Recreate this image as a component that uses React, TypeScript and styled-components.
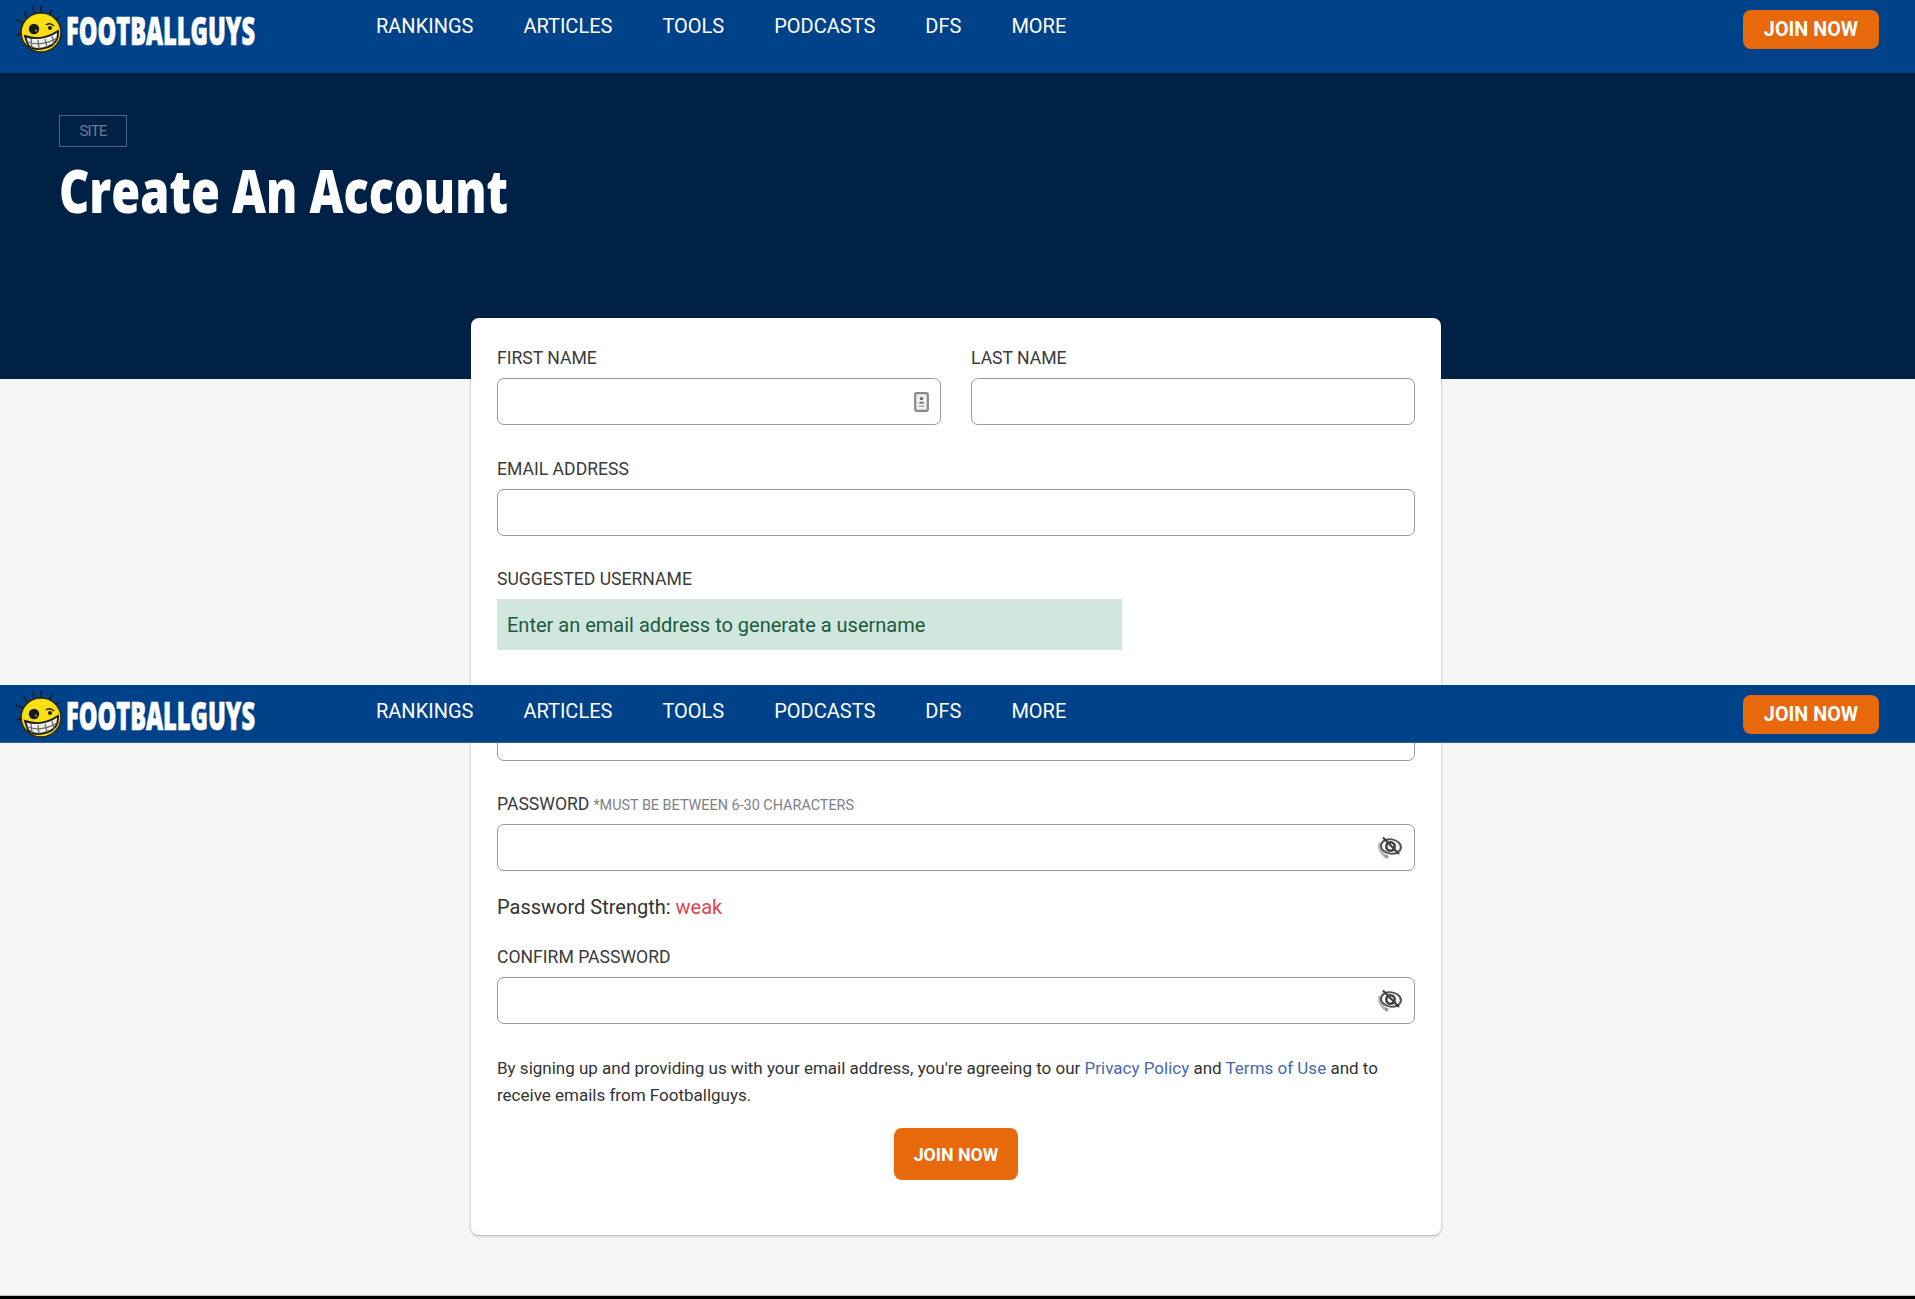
import * as React from 'react';
import styled, { createGlobalStyle } from 'styled-components';

const GlobalStyle = createGlobalStyle`
  html, body {
    margin: 0;
    padding: 0;
    background: #f6f6f6;
    font-family: Roboto, "Liberation Sans", sans-serif;
  }
  * { box-sizing: border-box; }
`;

const NAV_ITEMS = ['RANKINGS', 'ARTICLES', 'TOOLS', 'PODCASTS', 'DFS', 'MORE'];

const FaceIcon = () => (
  <svg width="46" height="48" viewBox="0 0 46 48">
    <g stroke="#1c1c1c" strokeWidth="1.5" strokeLinecap="round">
      <path d="M8 18 L0 15" />
      <path d="M6 28 L1 30" />
      <path d="M11 12 L8 7" />
      <path d="M18 9 L17 2" />
      <path d="M25 8 L25 1" />
      <path d="M33 10 L36 5" />
      <path d="M39 15 L43 12" />
    </g>
    <ellipse cx="25" cy="27.5" rx="20" ry="19.5" fill="#fbdf13" stroke="#2a2a18" strokeWidth="1.6" />
    <circle cx="18" cy="24" r="5.2" fill="#1a1a1a" />
    <circle cx="20" cy="25.5" r="1.2" fill="#777" />
    <path d="M30 20 Q34 17 38 21" fill="none" stroke="#1c1c1c" strokeWidth="1.4" />
    <circle cx="34" cy="23" r="2" fill="#1c1c1c" />
    <path d="M9 31 Q26 37 42 26 Q43 38 32 42 Q19 47 12 40 Z" fill="#f1f1ea" stroke="#1c1c1c" strokeWidth="1.9" />
    <g stroke="#6a6a6a" strokeWidth="1.3">
      <path d="M15 34 L16 43" />
      <path d="M22 35 L23 44" />
      <path d="M29 34 L31 42" />
      <path d="M36 31 L38 39" />
      <path d="M11 37 Q26 42 41 33" fill="none" />
    </g>
  </svg>
);

const ContactIcon = () => (
  <svg width="15" height="20" viewBox="0 0 15 20">
    <rect x="1.2" y="1.2" width="12.6" height="17.6" rx="1.5" fill="#f0f0f0" stroke="#8a8a8a" strokeWidth="2.2" />
    <circle cx="7.5" cy="6.6" r="1.7" fill="#666" />
    <path d="M4.4 11.4 Q7.5 7.4 10.6 11.4 Z" fill="#666" />
    <path d="M4.6 14.2 H10.4" stroke="#aaa" strokeWidth="1.4" />
  </svg>
);

const EyeOffIcon = () => (
  <svg width="26" height="24" viewBox="0 0 26 24">
    <path d="M3 7 Q1 14 8 20" fill="none" stroke="#b5b5b5" strokeWidth="3" />
    <circle cx="9.5" cy="20.5" r="2" fill="#9a9a9a" />
    <ellipse cx="14" cy="10.5" rx="10" ry="7.2" transform="rotate(8 14 10.5)" fill="none" stroke="#555" strokeWidth="2" />
    <circle cx="13.5" cy="10.5" r="4.2" fill="none" stroke="#444" strokeWidth="2.6" />
    <path d="M6 1.5 L22 18" stroke="#3c3c3c" strokeWidth="2" />
  </svg>
);

const Bar = styled.header<{ $height: number }>`
  display: flex;
  align-items: flex-start;
  height: ${(p) => p.$height}px;
  padding: 10px 36px 0 16px;
  background: #004289;
`;

const Logo = styled.a`
  display: flex;
  align-items: flex-start;
  width: 360px;
  height: 48px;
  margin-top: -5px;
`;

const Wordmark = styled.svg`
  margin: 10px 0 0 4px;
  overflow: visible;
`;

const Nav = styled.nav`
  display: flex;
  gap: 50px;
  padding-top: 4px;
  flex: 1;
`;

const NavLink = styled.a`
  color: #fff;
  font-size: 20px;
  line-height: 24px;
`;

const Button = styled.button<{ $large?: boolean }>`
  border: 0;
  border-radius: 8px;
  background: #e8690b;
  color: #fff;
  font-family: inherit;
  font-weight: 700;
  font-size: ${(p) => (p.$large ? 17.8 : 19.8)}px;
  width: ${(p) => (p.$large ? 124 : 136)}px;
  height: ${(p) => (p.$large ? 52 : 39)}px;
  padding: 0;
`;

const StickyBar = styled(Bar)`
  position: absolute;
  left: 0;
  right: 0;
  top: 685px;
  z-index: 5;
  border-bottom: 1px solid #2a64a4;
`;

const Page = styled.div`
  position: relative;
  min-height: 1299px;
  display: flex;
  flex-direction: column;
`;

const Hero = styled.section`
  height: 306px;
  padding: 42px 59px 0;
  background: #002146;
`;

const Tag = styled.span`
  display: flex;
  align-items: center;
  justify-content: center;
  width: 68px;
  height: 32px;
  border: 1px solid #4d6480;
  color: #6b7c93;
  font-size: 15px;
  letter-spacing: -0.8px;
`;

const Title = styled.h1`
  margin: 7px 0 0;
  color: #fff;
  font-family: "Open Sans", sans-serif;
  font-weight: 800;
  font-size: 60px;
  line-height: 72px;
  white-space: nowrap;
  transform: scaleX(0.78);
  transform-origin: left center;
`;

const Card = styled.main`
  position: relative;
  width: 970px;
  height: 917px;
  margin: -61px 474px 60px 471px;
  padding: 27px 26px 0;
  background: #fff;
  border-radius: 8px;
  box-shadow: 0 1px 3px rgba(0, 0, 0, 0.3);
`;

const Form = styled.form`
  display: flex;
  flex-direction: column;
  gap: 30px;
`;

const Row = styled.div`
  display: grid;
  grid-template-columns: 1fr 1fr;
  gap: 30px;
  margin-bottom: 1px;
`;

const Field = styled.div`
  display: flex;
  flex-direction: column;
`;

const Label = styled.label`
  display: block;
  height: 24px;
  margin-bottom: 9px;
  padding-top: 1px;
  color: #3a3a3a;
  font-size: 17.6px;
  line-height: 24px;
`;

const Hint = styled.small`
  color: #7c8289;
  font-size: 14.4px;
  margin-left: 4px;
`;

const InputWrap = styled.div`
  position: relative;
`;

const Input = styled.input`
  display: block;
  width: 100%;
  height: 47px;
  border: 1.5px solid #999;
  border-radius: 7px;
  background: #fff;
`;

const InputIcon = styled.span`
  position: absolute;
  top: 50%;
  right: 12px;
  transform: translateY(-50%);
  display: flex;
`;

const Suggest = styled.div`
  display: flex;
  align-items: center;
  width: 625px;
  height: 51px;
  margin-bottom: 1px;
  padding: 0 10px;
  background: #d1e7dd;
  color: #1b5a3e;
  font-size: 20px;
`;

const Strength = styled.div`
  margin: -7px 0;
  color: #333;
  font-size: 20px;
  line-height: 27px;
`;

const Weak = styled.span`
  color: #de4455;
`;

const Legal = styled.p`
  margin: 0;
  padding-top: 1px;
  color: #333;
  font-size: 17px;
  line-height: 27px;
`;

const LegalLink = styled.a`
  color: #4a68ac;
`;

const Submit = styled.div`
  display: flex;
  justify-content: center;
  margin-top: -11px;
`;

const Footer = styled.footer`
  margin-top: auto;
  height: 4px;
  background: #000;
  border-top: 1px solid #c4c4c4;
`;

const Header = ({ as, height }: { as?: typeof StickyBar; height: number }) => {
  const Wrapper = as ?? Bar;
  return (
    <Wrapper $height={height}>
      <Logo>
        <FaceIcon />
        <Wordmark width="189" height="32" viewBox="0 0 189 32">
          <text
            x="0"
            y="30"
            textLength="189"
            lengthAdjust="spacingAndGlyphs"
            fill="#fff"
            stroke="#fff"
            strokeWidth="0.7"
            fontFamily="'Open Sans', sans-serif"
            fontWeight="800"
            fontSize="38"
          >
            FOOTBALLGUYS
          </text>
        </Wordmark>
      </Logo>
      <Nav>
        {NAV_ITEMS.map((item) => (
          <NavLink key={item}>{item}</NavLink>
        ))}
      </Nav>
      <Button>JOIN NOW</Button>
    </Wrapper>
  );
};

const TextField = ({ label, hint, icon }: { label?: string; hint?: string; icon?: React.ReactNode }) => (
  <Field>
    <Label>
      {label}
      {hint && <Hint>{hint}</Hint>}
    </Label>
    <InputWrap>
      <Input />
      {icon}
    </InputWrap>
  </Field>
);

export default function App() {
  return (
    <Page>
      <GlobalStyle />
      <Header height={73} />
      <Hero>
        <Tag>SITE</Tag>
        <Title>Create An Account</Title>
      </Hero>
      <Card>
        <Form>
          <Row>
            <TextField
              label="FIRST NAME"
              icon={
                <InputIcon>
                  <ContactIcon />
                </InputIcon>
              }
            />
            <TextField label="LAST NAME" />
          </Row>
          <TextField label="EMAIL ADDRESS" />
          <Field>
            <Label>SUGGESTED USERNAME</Label>
            <Suggest>Enter an email address to generate a username</Suggest>
          </Field>
          <TextField />
          <TextField
            label="PASSWORD"
            hint="*MUST BE BETWEEN 6-30 CHARACTERS"
            icon={
              <InputIcon>
                <EyeOffIcon />
              </InputIcon>
            }
          />
          <Strength>
            Password Strength: <Weak>weak</Weak>
          </Strength>
          <TextField
            label="CONFIRM PASSWORD"
            icon={
              <InputIcon>
                <EyeOffIcon />
              </InputIcon>
            }
          />
          <Legal>
            By signing up and providing us with your email address, you're agreeing to our{' '}
            <LegalLink>Privacy Policy</LegalLink> and <LegalLink>Terms of Use</LegalLink> and to receive emails from
            Footballguys.
          </Legal>
          <Submit>
            <Button $large>JOIN NOW</Button>
          </Submit>
        </Form>
      </Card>
      <Footer />
      <Header as={StickyBar} height={58} />
    </Page>
  );
}
